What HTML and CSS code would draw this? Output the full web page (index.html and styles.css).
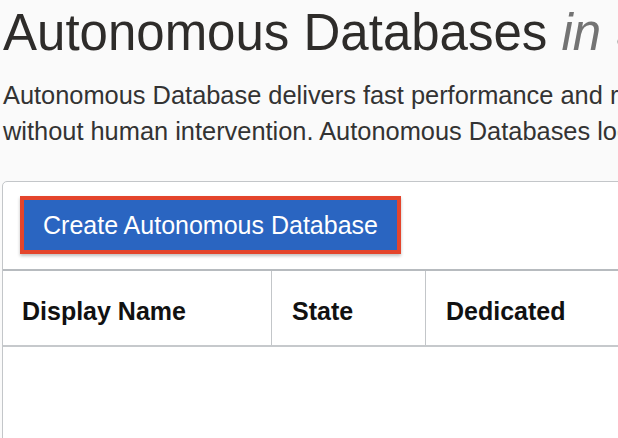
FILE: index.html
```html
<!DOCTYPE html>
<html lang="en">
<head>
<meta charset="utf-8">
<title>Autonomous Databases</title>
<link rel="stylesheet" href="styles.css">
</head>
<body>
<main class="page">
  <h1 class="title">Autonomous Databases <em class="scope">in</em> adw-compartment</h1>
  <p class="intro">Autonomous Database delivers fast performance and reliability, scaling and tuning itself<br>without human intervention. Autonomous Databases located in the current compartment are listed below.</p>
  <section class="card">
    <div class="toolbar">
      <div class="highlight">
        <button class="btn-primary" type="button">Create Autonomous Database</button>
      </div>
    </div>
    <div class="table-head">
      <div class="th">Display Name</div>
      <div class="th">State</div>
      <div class="th">Dedicated</div>
      <div class="th">OCPU Count</div>
    </div>
    <div class="table-body"></div>
  </section>
</main>
</body>
</html>
```

FILE: styles.css
```css
html, body {
  margin: 0;
  padding: 0;
  height: 100%;
  overflow: hidden;
  background: #fafafa;
}

.page {
  width: 1100px;
  padding: 7px 0 0 2px;
  font-family: "Liberation Sans", Arial, sans-serif;
  color: #333;
}

.title {
  margin: 0 0 0 1px;
  font-size: 51px;
  line-height: 51px;
  font-weight: 400;
  color: #2e2c2a;
  white-space: nowrap;
}

.scope {
  color: #737373;
  font-style: italic;
}

.intro {
  margin: 19px 0 0 1px;
  font-size: 25.4px;
  line-height: 36px;
  color: #333;
  white-space: nowrap;
}

.card {
  margin-top: 32px;
  background: #fff;
  border: 1px solid #c3c6c9;
  border-top-left-radius: 5px;
  height: 400px;
}

.toolbar {
  display: flex;
  padding: 14px 0 15px 17px;
  border-bottom: 2px solid #b7bbbf;
}

.highlight {
  border: 4px solid #e4452c;
  box-shadow: 0 2px 3px rgba(0, 0, 0, 0.25);
}

.btn-primary {
  display: block;
  height: 50px;
  padding: 0 19px;
  margin: 0;
  border: 0;
  background: #2a65c1;
  color: #fff;
  font-family: "Liberation Sans", Arial, sans-serif;
  font-size: 25px;
  line-height: 50px;
}

.table-head {
  display: grid;
  grid-template-columns: 269px 154px 300px 1fr;
  border-bottom: 2px solid #c6c9cc;
}

.th {
  padding: 26px 20px 19px;
  font-size: 25px;
  line-height: 29px;
  font-weight: 700;
  color: #111;
  border-right: 1px solid #c3c6c9;
}

.th:first-child {
  padding-left: 19px;
}
```
